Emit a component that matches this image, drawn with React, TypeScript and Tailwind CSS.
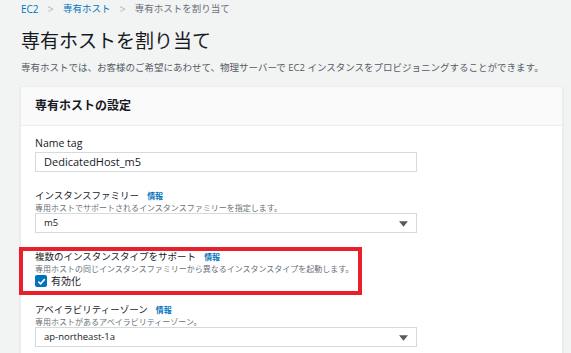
import React from "react";

const font = { fontFamily: '"Open Sans", "Noto Sans CJK JP", sans-serif' };

function Caret() {
  return (
    <svg width="9" height="6" viewBox="0 0 10 6" className="absolute right-[8px] top-[7px]">
      <path d="M0 0 H10 L5 6 Z" fill="#545b64" />
    </svg>
  );
}

function Select({ value }: { value: string }) {
  return (
    <div className="relative h-[20px] w-[382px] border border-[#d5dbdb] bg-white pl-[8px] text-[9.5px] leading-[18px] text-[#16191f]">
      {value}
      <Caret />
    </div>
  );
}

function Label({ text }: { text: string }) {
  return (
    <div className="flex h-[13px] items-center gap-[8px] whitespace-nowrap text-[9.5px] leading-[13px] text-[#16191f]">
      <span>{text}</span>
      <span className="text-[8px] font-bold text-[#0073bb]">情報</span>
    </div>
  );
}

function Desc({ text }: { text: string }) {
  return <div className="h-[11px] whitespace-nowrap text-[8px] leading-[11px] text-[#687078]">{text}</div>;
}

export default function App() {
  return (
    <div style={font} className="h-[353px] w-[571px] overflow-hidden bg-[#f2f3f3] pl-[21px]">
      <div className="mt-[2px] flex h-[14px] items-center gap-[9px] whitespace-nowrap text-[9.5px] leading-[14px]">
        <span className="text-[10px] text-[#0073bb]">EC2</span>
        <span className="text-[11px] text-[#aab7b8]">&gt;</span>
        <span className="text-[#0073bb]">専有ホスト</span>
        <span className="text-[11px] text-[#aab7b8]">&gt;</span>
        <span className="text-[#687078]">専有ホストを割り当て</span>
      </div>
      <h1 className="mt-[13px] h-[24px] whitespace-nowrap text-[19px] font-normal leading-[24px] text-[#16191f]">
        専有ホストを割り当て
      </h1>
      <p className="mt-[8px] h-[14px] whitespace-nowrap text-[9.5px] leading-[14px] text-[#545b64]">
        専有ホストでは、お客様のご希望にあわせて、物理サーバーで EC2 インスタンスをプロビジョニングすることができます。
      </p>
      <div className="-ml-px mt-[11px] w-[543px] border border-[#eaeded] bg-white shadow-[0_1px_1px_rgba(0,28,36,0.15)]">
        <div className="flex h-[39px] items-center border-b border-[#eaeded] bg-[#fafafa] pl-[14px] text-[12px] font-bold text-[#16191f]">
          専有ホストの設定
        </div>
        <div className="pl-[14px] pt-[10px] pb-[20px]">
          <div className="h-[14px] text-[10.5px] leading-[14px] text-[#16191f]">Name tag</div>
          <div className="mt-[2px] h-[20px] w-[382px] border border-[#d5dbdb] bg-white pl-[8px] text-[11px] leading-[18px] text-[#16191f]">
            DedicatedHost_m5
          </div>

          <div className="mt-[17px]">
            <Label text="インスタンスファミリー" />
            <Desc text="専用ホストでサポートされるインスタンスファミリーを指定します。" />
            <Select value="m5" />
          </div>

          <div className="relative mt-[17px]">
            <div className="pointer-events-none absolute -left-[16px] -top-[3px] h-[48px] w-[343px] border-[4px] border-[#e8202a]" />
            <Label text="複数のインスタンスタイプをサポート" />
            <Desc text="専用ホストの同じインスタンスファミリーから異なるインスタンスタイプを起動します。" />
            <div className="flex h-[14px] items-center gap-[4px]">
              <span className="flex h-[12px] w-[12px] items-center justify-center rounded-[2px] bg-[#0073bb]">
                <svg width="9" height="9" viewBox="0 0 10 10">
                  <path d="M1.5 5.2 L4 7.6 L8.6 2.4" stroke="white" strokeWidth="1.8" fill="none" />
                </svg>
              </span>
              <span className="text-[10px] leading-[14px] text-[#16191f]">有効化</span>
            </div>
          </div>

          <div className="mt-[15px]">
            <Label text="アベイラビリティーゾーン" />
            <Desc text="専用ホストがあるアベイラビリティーゾーン。" />
            <Select value="ap-northeast-1a" />
          </div>
        </div>
      </div>
    </div>
  );
}
